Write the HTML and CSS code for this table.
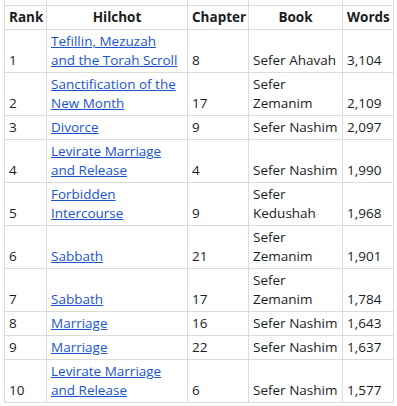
FILE: index.html
```html
<!DOCTYPE html>
<html>
<head>
<meta charset="utf-8">
<link rel="stylesheet" href="styles.css">
</head>
<body>
<table class="data">
  <colgroup>
    <col class="c-rank"><col class="c-hil"><col class="c-ch"><col class="c-book"><col class="c-words">
  </colgroup>
  <thead>
    <tr class="spacer"><td></td><td></td><td></td><td></td><td></td></tr>
    <tr class="head"><th>Rank</th><th>Hilchot</th><th>Chapter</th><th>Book</th><th>Words</th></tr>
  </thead>
  <tbody>
    <tr><td>1</td><td><a href="#">Tefillin, Mezuzah and the Torah Scroll</a></td><td>8</td><td>Sefer Ahavah</td><td>3,104</td></tr>
    <tr><td>2</td><td><a href="#">Sanctification of the New Month</a></td><td>17</td><td>Sefer Zemanim</td><td>2,109</td></tr>
    <tr><td>3</td><td><a href="#">Divorce</a></td><td>9</td><td>Sefer Nashim</td><td>2,097</td></tr>
    <tr><td>4</td><td><a href="#">Levirate Marriage and Release</a></td><td>4</td><td>Sefer Nashim</td><td>1,990</td></tr>
    <tr><td>5</td><td><a href="#">Forbidden Intercourse</a></td><td>9</td><td>Sefer Kedushah</td><td>1,968</td></tr>
    <tr><td>6</td><td><a href="#">Sabbath</a></td><td>21</td><td>Sefer Zemanim</td><td>1,901</td></tr>
    <tr><td>7</td><td><a href="#">Sabbath</a></td><td>17</td><td>Sefer Zemanim</td><td>1,784</td></tr>
    <tr><td>8</td><td><a href="#">Marriage</a></td><td>16</td><td>Sefer Nashim</td><td>1,643</td></tr>
    <tr><td>9</td><td><a href="#">Marriage</a></td><td>22</td><td>Sefer Nashim</td><td>1,637</td></tr>
    <tr><td>10</td><td><a href="#">Levirate Marriage and Release</a></td><td>6</td><td>Sefer Nashim</td><td>1,577</td></tr>
  </tbody>
</table>
</body>
</html>
```

FILE: styles.css
```css
html, body {
  margin: 0;
  padding: 0;
  background: #ffffff;
}

body {
  font-family: "Open Sans", "Liberation Sans", sans-serif;
  font-size: 13.5px;
  line-height: 19px;
  color: #1b1c1d;
}

.data {
  border-collapse: collapse;
  table-layout: fixed;
  width: 389px;
  margin-left: 4px;
}

.c-rank { width: 42px; }
.c-hil { width: 141px; }
.c-ch { width: 61px; }
.c-book { width: 94px; }
.c-words { width: 51px; }

.data td,
.data th {
  border: 1px solid #dcdcdc;
  padding: 2px 4px;
  vertical-align: bottom;
  text-align: left;
}

.data th {
  font-weight: 700;
  text-align: center;
}

.spacer td {
  border-top: 0;
  padding: 0;
  height: 5px;
  line-height: 0;
}

.data a {
  color: #1a55cc;
  text-decoration: underline;
}
```
